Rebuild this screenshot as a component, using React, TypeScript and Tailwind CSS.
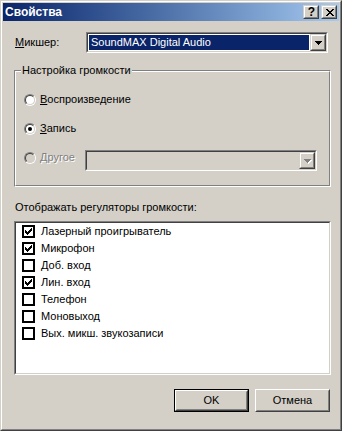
import React from "react";

const raised =
  "border border-t-[#d4d0c8] border-l-[#d4d0c8] border-r-[#404040] border-b-[#404040]";
const raisedInner =
  "border border-t-white border-l-white border-r-[#808080] border-b-[#808080]";
const sunkenOuter =
  "border border-t-[#808080] border-l-[#808080] border-r-white border-b-white";
const sunkenInner =
  "border border-t-[#404040] border-l-[#404040] border-r-[#d4d0c8] border-b-[#d4d0c8]";

function Arrow({ disabled }: { disabled?: boolean }) {
  const d = "M0 0h7v1h-1v1h-1v1h-1v1h-1v-1h-1v-1h-1v-1h-1z";
  return (
    <svg width="8" height="5" viewBox="0 0 8 5" shapeRendering="crispEdges">
      {disabled ? (
        <>
          <path d={d} transform="translate(1 1)" fill="#ffffff" />
          <path d={d} fill="#808080" />
        </>
      ) : (
        <path d={d} fill="#000000" />
      )}
    </svg>
  );
}

function DropButton({ disabled }: { disabled?: boolean }) {
  return (
    <div className={`w-[16px] h-full ${raised} bg-[#d4d0c8]`}>
      <div className={`w-full h-full ${raisedInner} flex items-center justify-center pl-[1px] pt-[1px]`}>
        <Arrow disabled={disabled} />
      </div>
    </div>
  );
}

function CaptionBtn({ children, className = "" }: { children: React.ReactNode; className?: string }) {
  return (
    <div className={`w-[16px] h-[14px] ${raised} bg-[#d4d0c8] ${className}`}>
      <div className={`w-full h-full ${raisedInner} flex items-center justify-center`}>{children}</div>
    </div>
  );
}

function CloseGlyph() {
  return (
    <svg width="8" height="7" viewBox="0 0 8 7" shapeRendering="crispEdges" className="ml-[1px]">
      <path
        fill="#000"
        d="M0 0h2v1h-2z M6 0h2v1h-2z M1 1h2v1h-2z M5 1h2v1h-2z M2 2h4v1h-4z M3 3h2v1h-2z M2 4h4v1h-4z M1 5h2v1h-2z M5 5h2v1h-2z M0 6h2v1h-2z M6 6h2v1h-2z"
      />
    </svg>
  );
}

function Radio({ checked, disabled }: { checked?: boolean; disabled?: boolean }) {
  return (
    <span className={`block w-[12px] h-[12px] rounded-full ${sunkenOuter} shrink-0`}>
      <span
        className={`flex w-full h-full rounded-full ${sunkenInner} ${disabled ? "bg-[#d4d0c8]" : "bg-white"} items-center justify-center`}
      >
        {checked && <span className="block w-[4px] h-[4px] rounded-full bg-black" />}
      </span>
    </span>
  );
}

function CheckMark() {
  return (
    <svg width="7" height="7" viewBox="0 0 7 7" shapeRendering="crispEdges">
      <path
        fill="#000"
        d="M0 2h1v3h-1z M1 3h1v3h-1z M2 4h1v3h-1z M3 3h1v3h-1z M4 2h1v3h-1z M5 1h1v3h-1z M6 0h1v3h-1z"
      />
    </svg>
  );
}

function CheckRow({ label, checked }: { label: string; checked?: boolean }) {
  return (
    <div className="h-[17px] flex items-center pl-[6px]">
      <span className="w-[13px] h-[13px] border-2 border-black bg-white flex items-center justify-center shrink-0">
        {checked && <CheckMark />}
      </span>
      <span className="ml-[6px] whitespace-nowrap">{label}</span>
    </div>
  );
}

function PushButton({ children, isDefault }: { children: React.ReactNode; isDefault?: boolean }) {
  if (isDefault) {
    return (
      <div className="w-[75px] h-[23px] border border-black bg-[#d4d0c8]">
        <div className="w-full h-full border border-t-white border-l-white border-r-[#404040] border-b-[#404040]">
          <div className="w-full h-full border border-t-[#d4d0c8] border-l-[#d4d0c8] border-r-[#808080] border-b-[#808080] flex items-center justify-center">
            {children}
          </div>
        </div>
      </div>
    );
  }
  return (
    <div className="w-[75px] h-[23px] border border-t-white border-l-white border-r-[#404040] border-b-[#404040] bg-[#d4d0c8]">
      <div className="w-full h-full border border-t-[#d4d0c8] border-l-[#d4d0c8] border-r-[#808080] border-b-[#808080] flex items-center justify-center">
        {children}
      </div>
    </div>
  );
}

export default function App() {
  return (
    <div className="w-[342px] h-[431px] bg-[#d4d0c8] font-['Liberation_Sans',Arial,sans-serif] text-[11px] leading-[13px] text-black select-none">
      <div className="w-full h-full border border-t-[#d4d0c8] border-l-[#d4d0c8] border-r-[#404040] border-b-[#404040]">
        <div className="w-full h-full border border-t-white border-l-white border-r-[#808080] border-b-[#808080] p-[1px] flex flex-col">
          {/* Title bar */}
          <div className="h-[18px] shrink-0 flex items-center bg-linear-to-r from-[#0a246a] to-[#a6caf0] pl-[2px] pr-[2px]">
            <span className="flex-1 text-white font-bold text-[12px] leading-[14px] whitespace-nowrap">Свойства</span>
            <CaptionBtn>
              <span className="font-bold text-[12px] leading-[12px] ml-[1px]">?</span>
            </CaptionBtn>
            <CaptionBtn className="ml-[2px]">
              <CloseGlyph />
            </CaptionBtn>
          </div>

          {/* Body */}
          <div className="flex flex-col pl-[11px] pt-[11px]">
            {/* Mixer row */}
            <div className="h-[21px] flex items-center">
              <div className="w-[72px] pl-[1px] whitespace-nowrap">
                <u className="underline-offset-[1px]">М</u>икшер:
              </div>
              <div className={`w-[242px] h-[21px] ${sunkenOuter}`}>
                <div className={`w-full h-full ${sunkenInner} bg-white flex`}>
                  <div className="flex-1 m-[1px] mr-[1px] bg-[#0a246a] text-white flex items-center pl-[2px] whitespace-nowrap">
                    SoundMAX Digital Audio
                  </div>
                  <DropButton />
                </div>
              </div>
            </div>

            {/* Group box */}
            <div className={`relative mt-[17px] w-[317px] h-[117px] ${sunkenOuter}`}>
              <div className="w-full h-full border border-t-white border-l-white border-r-[#808080] border-b-[#808080] pt-[21px] pl-[8px] flex flex-col">
                <div className="h-[13px] flex items-center">
                  <Radio />
                  <span className="ml-[4px] whitespace-nowrap">
                    <u className="underline-offset-[1px]">В</u>оспроизведение
                  </span>
                </div>
                <div className="h-[13px] mt-[16px] flex items-center">
                  <Radio checked />
                  <span className="ml-[4px] whitespace-nowrap">
                    <u className="underline-offset-[1px]">З</u>апись
                  </span>
                </div>
                <div className="h-[21px] mt-[15px] flex items-start">
                  <div className="w-[61px] h-[15px] flex items-center">
                    <Radio disabled />
                    <span className="ml-[4px] whitespace-nowrap text-[#808080] [text-shadow:1px_1px_0_#ffffff]">
                      <u className="underline-offset-[1px]">Д</u>ругое
                    </span>
                  </div>
                  <div className={`w-[232px] h-[21px] ${sunkenOuter}`}>
                    <div className={`w-full h-full ${sunkenInner} bg-[#d4d0c8] flex justify-end`}>
                      <DropButton disabled />
                    </div>
                  </div>
                </div>
              </div>
              <span className="absolute -top-[7px] left-[6px] px-[1px] bg-[#d4d0c8] whitespace-nowrap">
                Настройка громкости
              </span>
            </div>

            {/* List label */}
            <div className="mt-[14px] h-[13px] pl-[1px] whitespace-nowrap">Отображать регуляторы громкости:</div>

            {/* List box */}
            <div className={`mt-[7px] w-[317px] h-[154px] ${sunkenOuter}`}>
              <div className={`w-full h-full ${sunkenInner} bg-white flex flex-col`}>
                <CheckRow label="Лазерный проигрыватель" checked />
                <CheckRow label="Микрофон" checked />
                <CheckRow label="Доб. вход" />
                <CheckRow label="Лин. вход" checked />
                <CheckRow label="Телефон" />
                <CheckRow label="Моновыход" />
                <CheckRow label="Вых. микш. звукозаписи" />
              </div>
            </div>

            {/* Buttons */}
            <div className="mt-[14px] w-[317px] flex justify-end gap-[6px] pr-[1px]">
              <PushButton isDefault>OK</PushButton>
              <PushButton>Отмена</PushButton>
            </div>
          </div>
        </div>
      </div>
    </div>
  );
}
